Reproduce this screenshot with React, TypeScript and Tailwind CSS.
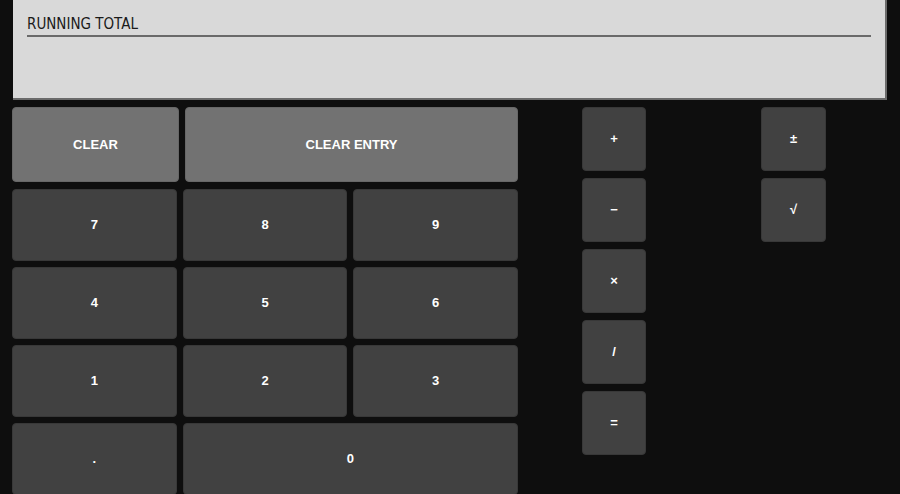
import React from 'react';

const numRows = [
  ['7', '8', '9'],
  ['4', '5', '6'],
  ['1', '2', '3'],
];

const ops = ['+', '−', '×', '/', '='];
const extras = ['±', '√'];

const keyText = "text-[13px] font-bold text-white font-['Liberation_Sans',Arial,sans-serif]";

const Key: React.FC<{ label: string; className?: string }> = ({ label, className = '' }) => (
  <button
    className={`flex items-center justify-center rounded-[4px] border border-[#383838] bg-[#414141] ${keyText} ${className}`}
  >
    {label}
  </button>
);

const App: React.FC = () => {
  return (
    <div className="h-[494px] w-[900px] overflow-hidden bg-[#0e0e0e]">
      <div className="ml-[13px] h-[100px] w-[874px] border-r-2 border-b-2 border-[#6b6b6b] bg-[#d9d9d9] px-[14px] pt-[16px]">
        <div className="border-b-2 border-[#6a6a6a] pb-[2px] text-[15px] leading-[17px] uppercase font-stretch-condensed text-[#1a1a1a] font-['DejaVu_Sans_Condensed','DejaVu_Sans',sans-serif]">
          Running Total
        </div>
      </div>

      <div className="mt-[7px] flex pl-[12px]">
        <div className="flex w-[506px] flex-col">
          <div className="flex h-[75px] gap-[6px]">
            <button className={`w-[167px] rounded-[4px] border border-[#676767] bg-[#727272] ${keyText}`}>CLEAR</button>
            <button className={`flex-1 rounded-[4px] border border-[#676767] bg-[#727272] ${keyText}`}>CLEAR ENTRY</button>
          </div>
          <div className="mt-[7px] grid grid-cols-3 gap-[6px]">
            {numRows.flat().map((n) => (
              <Key key={n} label={n} className="h-[72px]" />
            ))}
            <Key label="." className="h-[72px]" />
            <Key label="0" className="col-span-2 h-[72px]" />
          </div>
        </div>

        <div className="ml-[64px] flex flex-col gap-[7px]">
          {ops.map((o) => (
            <Key key={o} label={o} className="h-[64px] w-[64px]" />
          ))}
        </div>

        <div className="ml-[115px] flex flex-col gap-[7px]">
          {extras.map((o) => (
            <Key key={o} label={o} className="h-[64px] w-[65px]" />
          ))}
        </div>
      </div>
    </div>
  );
};

export default App;
